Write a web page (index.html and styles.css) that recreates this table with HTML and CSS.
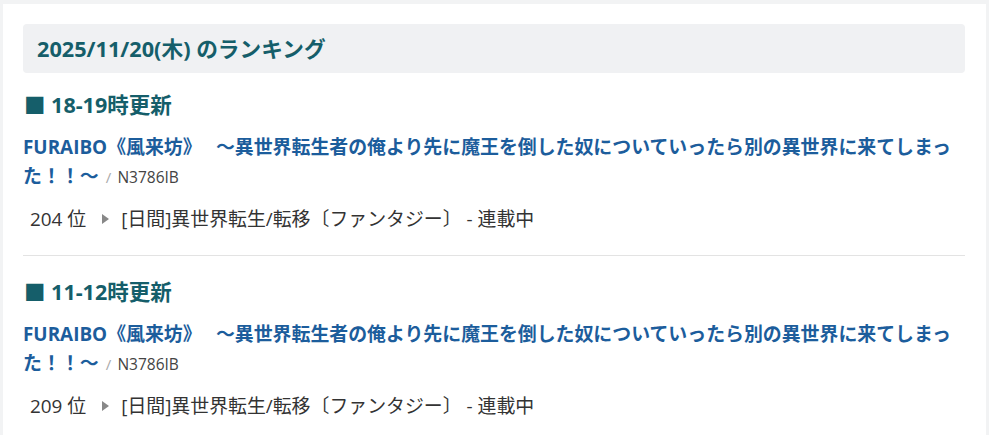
FILE: index.html
```html
<!doctype html>
<html lang="ja">
    <head>
        <meta charset="utf-8">
        <title>ランキング</title>
        <link rel="stylesheet" href="styles.css">
    </head>
    <body>
        <div class="card">
            <h2 class="dayTitle">2025/11/20(木) のランキング</h2>

            <div class="entry">
                <h3 class="hourTitle">■ 18-19時更新</h3>
                <div class="novel">
                    <a class="novelTitle" href="#">FURAIBO《風来坊》　&nbsp;～異世界転生者の俺より先に魔王を倒した奴についていったら別の異世界に来てしまった！！～</a>
                    <span class="slash">/</span>
                    <span class="ncode">N3786IB</span>
                </div>
                <div class="meta">
                    <span class="rank">204 位</span>
                    <span class="arrow"></span>
                    <span>[日間]異世界転生/転移〔ファンタジー〕 - 連載中</span>
                </div>
            </div>

            <div class="entry">
                <h3 class="hourTitle">■ 11-12時更新</h3>
                <div class="novel">
                    <a class="novelTitle" href="#">FURAIBO《風来坊》　&nbsp;～異世界転生者の俺より先に魔王を倒した奴についていったら別の異世界に来てしまった！！～</a>
                    <span class="slash">/</span>
                    <span class="ncode">N3786IB</span>
                </div>
                <div class="meta">
                    <span class="rank">209 位</span>
                    <span class="arrow"></span>
                    <span>[日間]異世界転生/転移〔ファンタジー〕 - 連載中</span>
                </div>
            </div>
        </div>
    </body>
</html>
```

FILE: styles.css
```css
body {
    margin: 0;
    padding: 4px 3px 0;
    background-color: #f2f3f4;
    font-family: "Open Sans", "Noto Sans CJK JP", sans-serif;
    color: #333;
}

.card {
    background-color: #fff;
    padding: 20px 21px 0 20px;
    min-height: 431px;
    box-sizing: border-box;
}

.dayTitle {
    margin: 0;
    padding: 0 14px;
    height: 49px;
    line-height: 49px;
    background-color: #f0f1f3;
    border-radius: 4px;
    font-size: 21.7px;
    font-weight: 700;
    color: #155e6a;
}

.entry {
    padding: 21px 0 21px;
    border-bottom: 1px solid #e3e3e3;
}

.entry:first-of-type {
    padding-top: 17px;
}

.hourTitle {
    margin: 0 0 13px 1px;
    font-size: 21.5px;
    line-height: 30px;
    font-weight: 700;
    color: #155e6a;
}

.novel {
    line-height: 28px;
}

.novelTitle {
    font-size: 18.9px;
    font-weight: 700;
    color: #1c5d9c;
    text-decoration: none;
}

.slash {
    font-size: 15px;
    color: #aaa;
    margin: 0 2px 0 3px;
}

.ncode {
    font-size: 15.5px;
    color: #444;
}

.meta {
    display: flex;
    align-items: center;
    gap: 10px;
    margin-top: 13px;
    padding-left: 7px;
    font-size: 18.9px;
    line-height: 30px;
    color: #333;
}

.arrow {
    width: 0;
    height: 0;
    border-top: 5px solid transparent;
    border-bottom: 5px solid transparent;
    border-left: 7px solid #888;
    margin: 0 2px 0 6px;
}
```
